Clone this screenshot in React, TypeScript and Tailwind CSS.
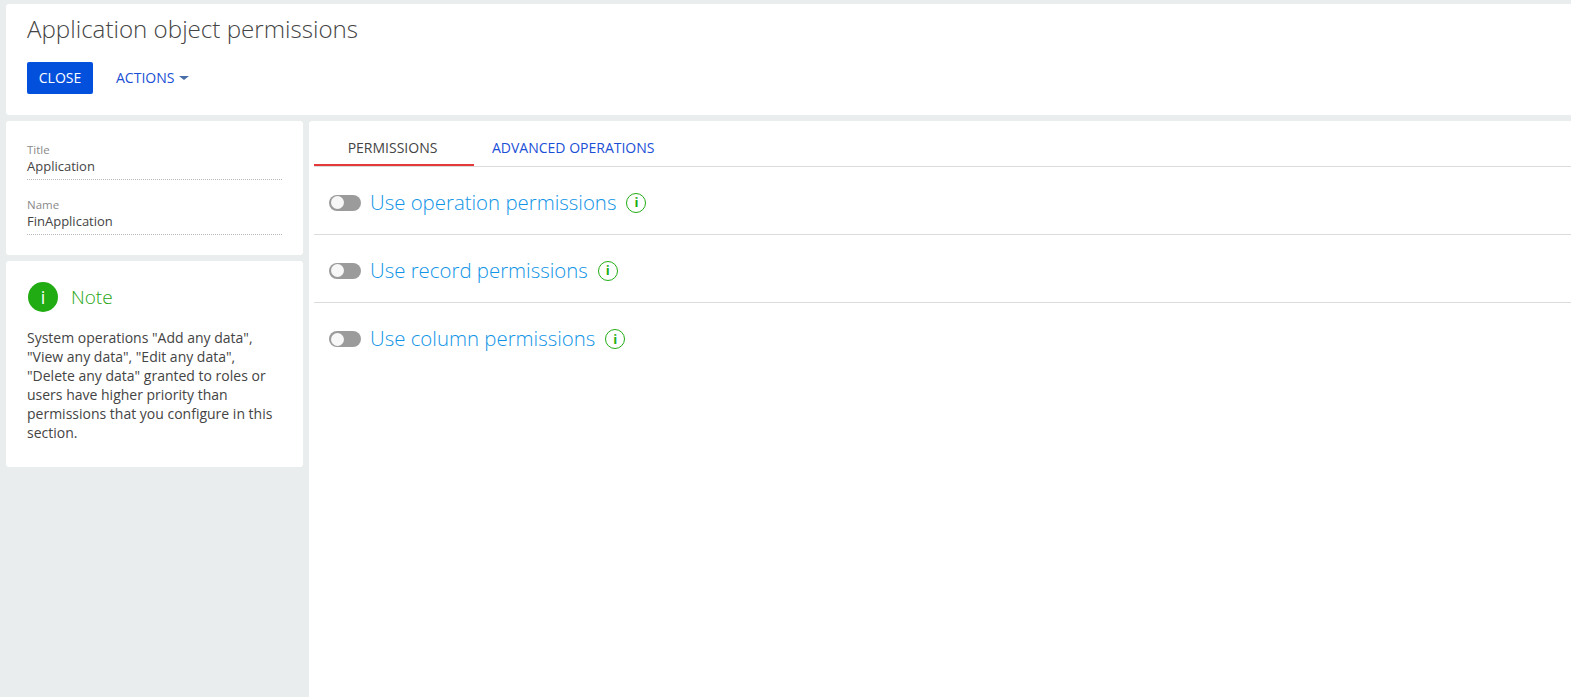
function Field({ label, value }: { label: string; value: string }) {
  return (
    <div className="h-[38px] w-[255px] border-b border-dotted border-[#b8b8b8]">
      <div className="text-[11.5px] leading-[16px] text-[#8a8a8a]">{label}</div>
      <div className="text-[13px] leading-[17px] text-[#444]">{value}</div>
    </div>
  );
}

function PermissionRow({ label, border }: { label: string; border?: boolean }) {
  return (
    <div className={`flex h-[68px] items-center pl-[15px] pt-1 ${border ? 'border-b border-[#dcdcdc]' : ''}`}>
      <div className="flex h-4 w-8 items-center rounded-full bg-[#9b9b9b] pl-[2px]">
        <div className="h-[13px] w-[13px] rounded-full bg-[#f7f7f7]" />
      </div>
      <span className="ml-[9px] -mt-[2px] text-[20.4px] font-light leading-[28px] text-[#0f94e6]">{label}</span>
      <div className="ml-[10px] flex h-5 w-5 items-center justify-center rounded-full border border-[#22ac14]">
        <span className="text-[13px] font-bold leading-none text-[#22ac14]">i</span>
      </div>
    </div>
  );
}

export default function App() {
  return (
    <div className="flex h-[697px] flex-col gap-[6px] overflow-hidden bg-[#e9eded] pl-[6px] pt-1 font-['Open_Sans',sans-serif]">
      <div className="h-[111px] rounded-l-[3px] bg-white pl-[21px] pt-[8px]">
        <h1 className="text-[24.15px] font-light leading-[33px] text-[#444]">Application object permissions</h1>
        <div className="mt-[17px] flex items-center">
          <button className="h-8 w-[66px] rounded-[2px] bg-[#0250dc] pb-[2px] text-[14px] font-normal text-white">CLOSE</button>
          <button className="-mt-[2px] ml-[23px] flex items-center text-[14px] text-[#1a4fd6]">
            ACTIONS
            <span className="ml-[5px] mt-[2px] h-0 w-0 border-x-[5px] border-t-[4px] border-x-transparent border-t-[#4a6ea8]" />
          </button>
        </div>
      </div>

      <div className="flex flex-1 gap-[6px]">
        <div className="flex w-[297px] flex-col gap-[6px]">
          <div className="flex h-[134px] flex-col gap-[17px] rounded-[3px] bg-white pl-[21px] pt-[21px]">
            <Field label="Title" value="Application" />
            <Field label="Name" value="FinApplication" />
          </div>
          <div className="h-[206px] rounded-[3px] bg-white pl-[21px] pr-[25px] pt-[21px]">
            <div className="flex items-center">
              <div className="ml-[1px] flex h-[30px] w-[30px] items-center justify-center rounded-full bg-[#22ac14]">
                <span className="text-[18px] leading-none text-white">i</span>
              </div>
              <span className="ml-[13px] text-[19px] font-light text-[#1ea50f]">Note</span>
            </div>
            <p className="mt-[16px] text-[14px] leading-[19px] text-[#444]">
              System operations "Add any data", "View any data", "Edit any data", "Delete any data" granted to roles or users have higher priority than permissions that you configure in this section.
            </p>
          </div>
        </div>

        <div className="flex-1 rounded-tl-[3px] bg-white pl-[5px]">
          <div className="flex h-[46px] border-b border-[#dcdcdc]">
            <div className="flex h-[45px] w-[160px] items-center justify-center border-b-2 border-[#e5383b] pr-[3px] pt-[9px]">
              <span className="text-[14px] text-[#444]">PERMISSIONS</span>
            </div>
            <div className="flex items-center pl-[18px] pt-[7px]">
              <span className="text-[14px] text-[#1a4fd6]">ADVANCED OPERATIONS</span>
            </div>
          </div>
          <PermissionRow label="Use operation permissions" border />
          <PermissionRow label="Use record permissions" border />
          <PermissionRow label="Use column permissions" />
        </div>
      </div>
    </div>
  );
}
